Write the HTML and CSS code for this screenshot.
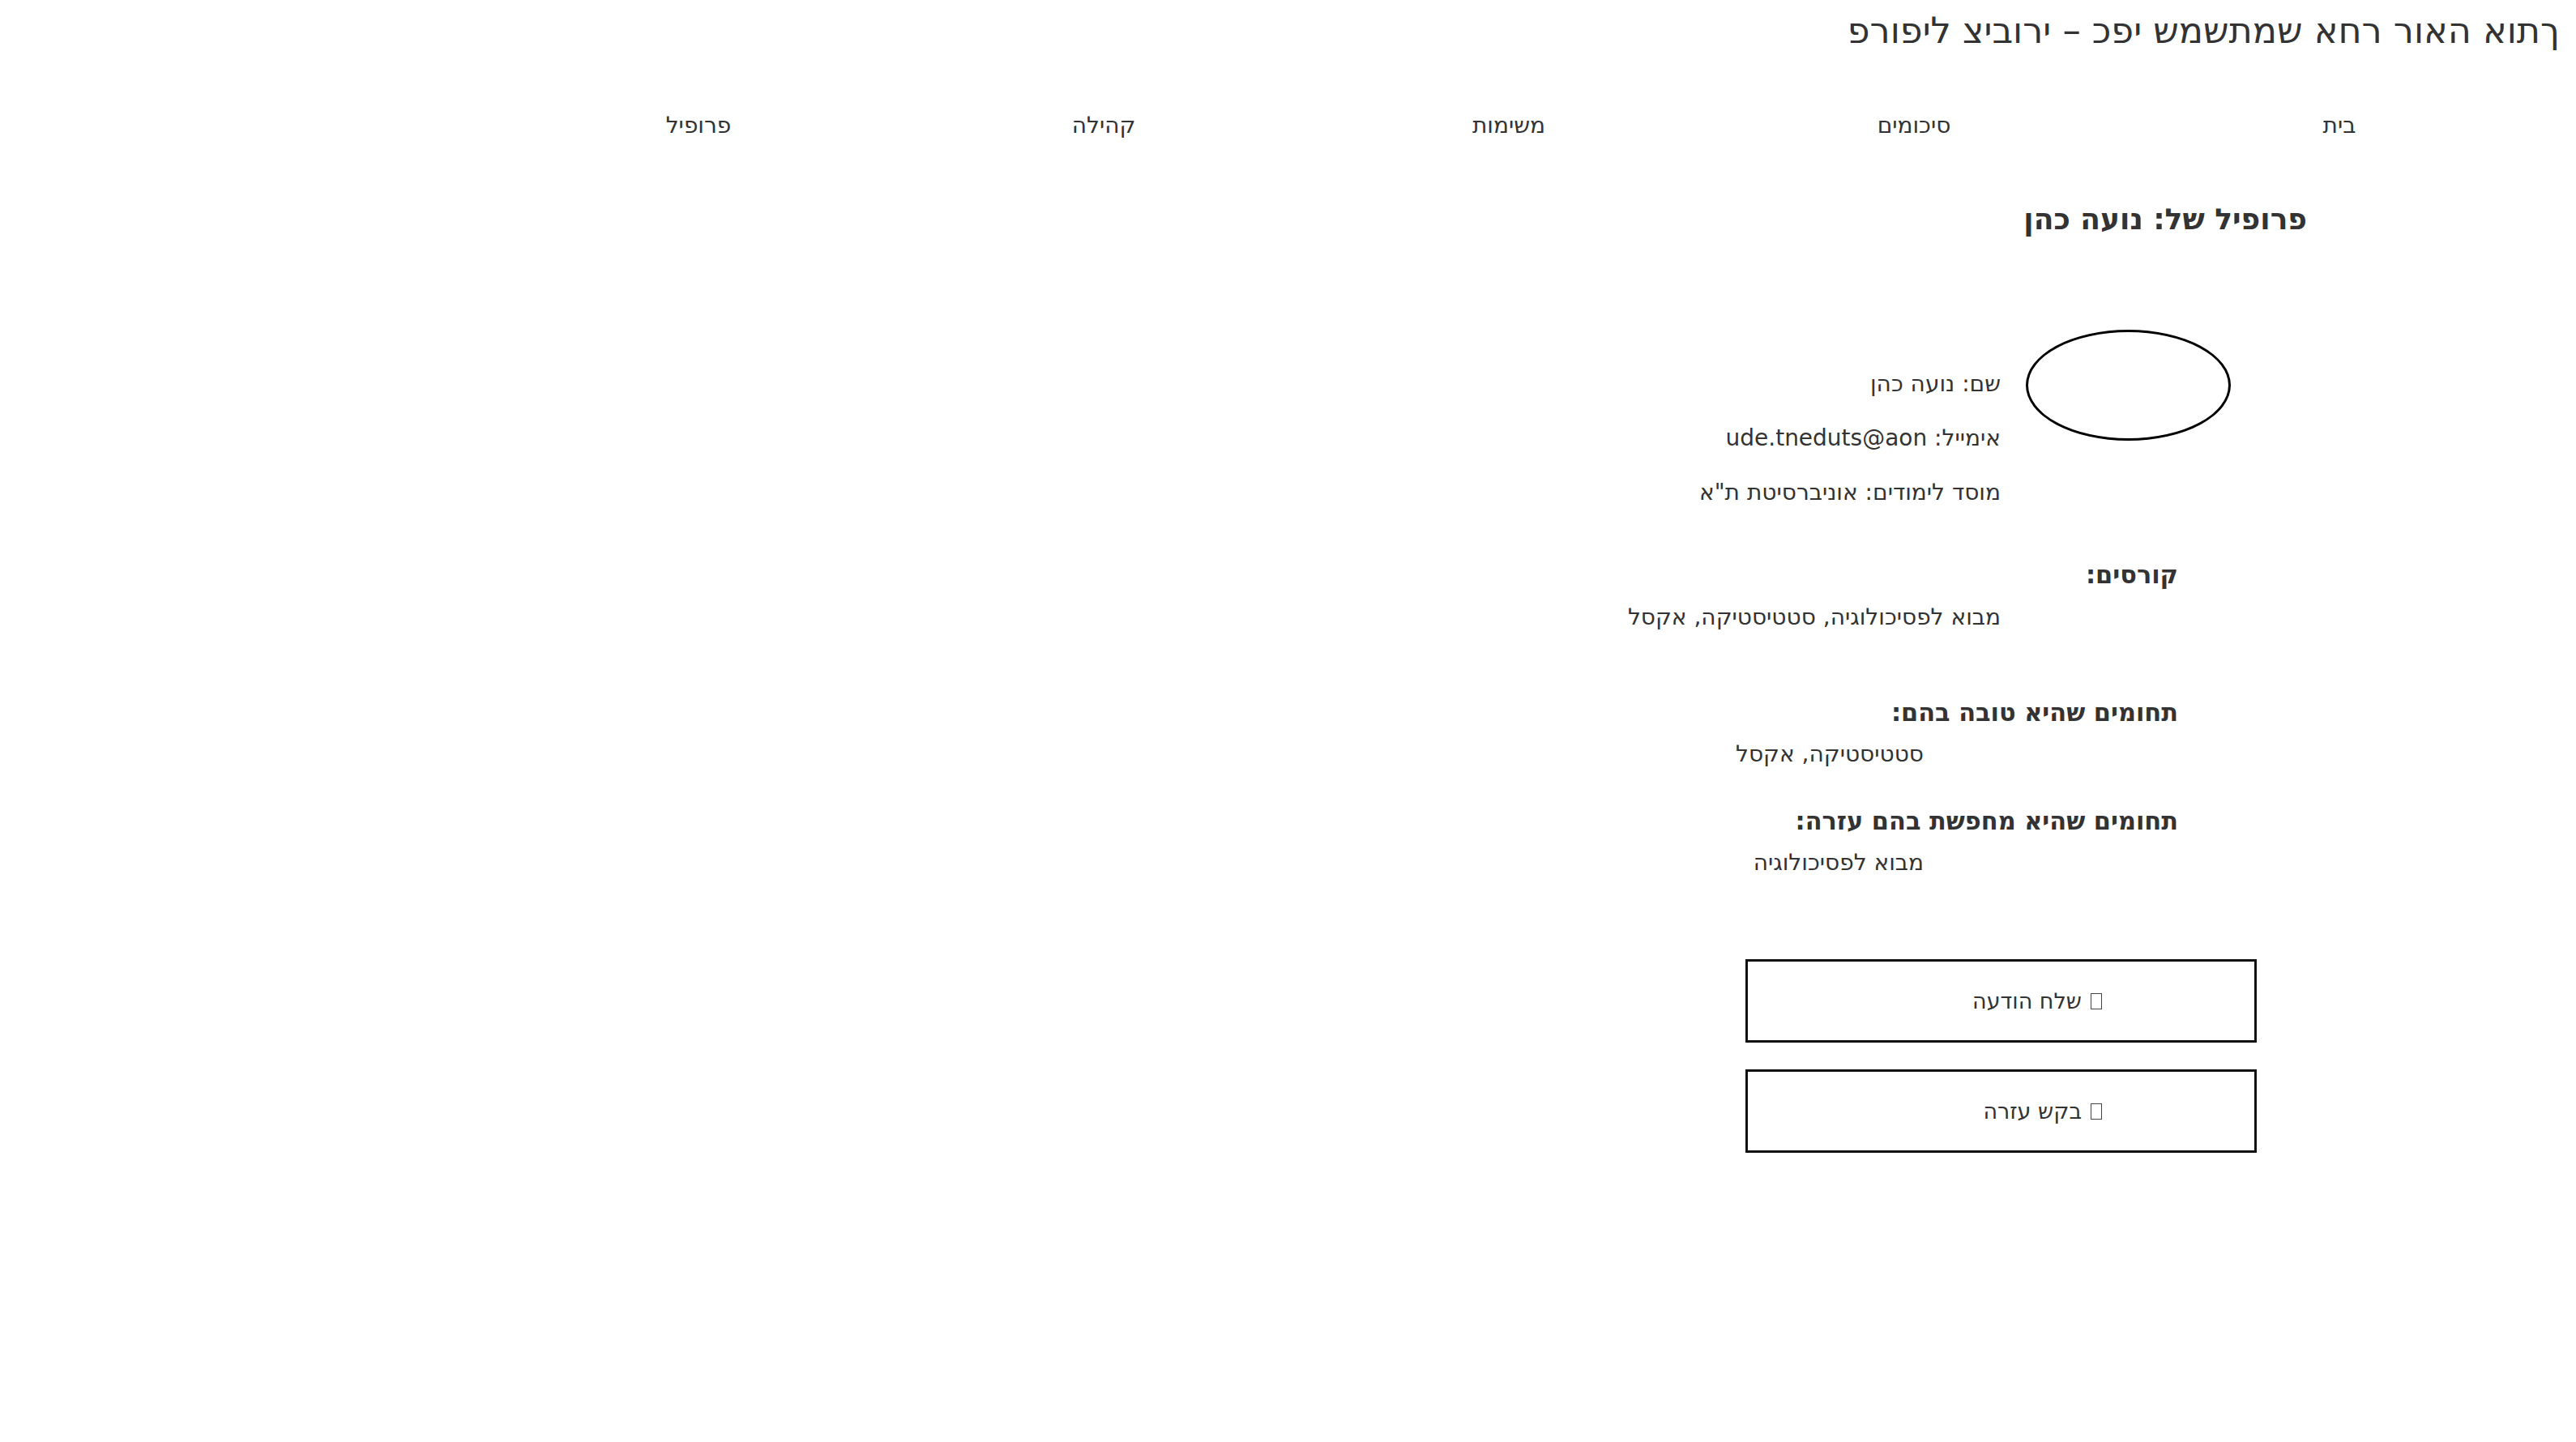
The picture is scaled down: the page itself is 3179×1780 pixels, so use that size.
FILE: index.html
```html
<!DOCTYPE html>
<html lang="he" dir="rtl">
<head>
<meta charset="utf-8">
<title>פרופיל ציבורי</title>
<link rel="stylesheet" href="styles.css">
</head>
<body>
<h1 class="page-title">פרופיל ציבורי – כפי שמשתמש אחר רואה אותך</h1>
<nav class="nav">
  <a class="nav-item nav-first" href="#">בית</a>
  <a class="nav-item" href="#">סיכומים</a>
  <a class="nav-item" href="#">משימות</a>
  <a class="nav-item" href="#">קהילה</a>
  <a class="nav-item" href="#">פרופיל</a>
</nav>
<main class="main">
  <h2 class="profile-heading">פרופיל של: נועה כהן</h2>
  <div class="profile-top">
    <div class="avatar"></div>
    <div class="info">
      <p class="info-line">שם: נועה כהן</p>
      <p class="info-line email">אימייל: noa@student.edu</p>
      <p class="info-line">מוסד לימודים: אוניברסיטת ת"א</p>
    </div>
  </div>
  <h3 class="section-title courses-title">קורסים:</h3>
  <p class="courses">מבוא לפסיכולוגיה, סטטיסטיקה, אקסל</p>
  <h3 class="section-title skills-title">תחומים שהיא טובה בהם:</h3>
  <p class="skill-value">סטטיסטיקה, אקסל</p>
  <h3 class="section-title help-title">תחומים שהיא מחפשת בהם עזרה:</h3>
  <p class="skill-value">מבוא לפסיכולוגיה</p>
  <div class="actions">
    <button class="action-btn"><span class="tofu"></span><span class="btn-label">שלח הודעה</span></button>
    <button class="action-btn"><span class="tofu"></span><span class="btn-label">בקש עזרה</span></button>
  </div>
</main>
</body>
</html>
```
FILE: styles.css
```css
html, body {
  margin: 0;
  padding: 0;
  background: #ffffff;
}
body {
  direction: rtl;
  font-family: "DejaVu Sans", "Noto Sans", sans-serif;
  color: #333333;
}
.page-title {
  margin: 0;
  padding: 13px 20px 0 0;
  font-size: 44.5px;
  font-weight: normal;
  line-height: 50px;
  text-align: right;
  direction: ltr;
  unicode-bidi: bidi-override;
}
.nav {
  display: flex;
  margin-top: 72px;
  padding-right: 17px;
  height: 40px;
}
.nav-item {
  width: 500px;
  flex: none;
  text-align: center;
  font-size: 28px;
  line-height: 40px;
  color: #333333;
  text-decoration: none;
}
.nav-first {
  width: 550px;
}
.main {
  padding-right: 332px;
}
.profile-heading {
  margin: 76px 0 0 0;
  font-size: 36px;
  line-height: 40px;
  font-weight: bold;
}
.profile-top {
  display: flex;
  align-items: flex-start;
  margin-top: 116px;
}
.avatar {
  width: 247px;
  height: 131px;
  border: 3px solid #000000;
  border-radius: 50%;
  margin-right: 94px;
  flex: none;
}
.info {
  margin-top: 33px;
  margin-right: 31px;
}
.info-line {
  margin: 0;
  font-size: 28px;
  line-height: 67px;
}
.email {
  unicode-bidi: bidi-override;
}
.section-title {
  margin: 0;
  font-size: 30.4px;
  line-height: 40px;
  font-weight: bold;
  margin-right: 159px;
}
.courses-title {
  margin-top: 49px;
}
.courses {
  margin: 12px 378px 0 0;
  font-size: 28px;
  line-height: 40px;
}
.skills-title {
  margin-top: 78px;
}
.help-title {
  margin-top: 43px;
}
.skill-value {
  margin: 11px 473px 0 0;
  font-size: 28px;
  line-height: 40px;
}
.actions {
  display: flex;
  flex-direction: column;
  align-items: flex-start;
  gap: 33px;
  margin-top: 99px;
  margin-right: 62px;
}
.action-btn {
  width: 631px;
  height: 103px;
  border: 3px solid #111111;
  background: #ffffff;
  padding: 0 188px 0 0;
  display: flex;
  align-items: center;
  justify-content: flex-start;
  gap: 11px;
  font-family: "DejaVu Sans", "Noto Sans", sans-serif;
  font-size: 27px;
  color: #333333;
  direction: rtl;
  cursor: pointer;
}
.tofu {
  display: inline-block;
  width: 12px;
  height: 18px;
  border: 1px solid #444444;
  flex: none;
}
.btn-label {
  line-height: 40px;
}
```
